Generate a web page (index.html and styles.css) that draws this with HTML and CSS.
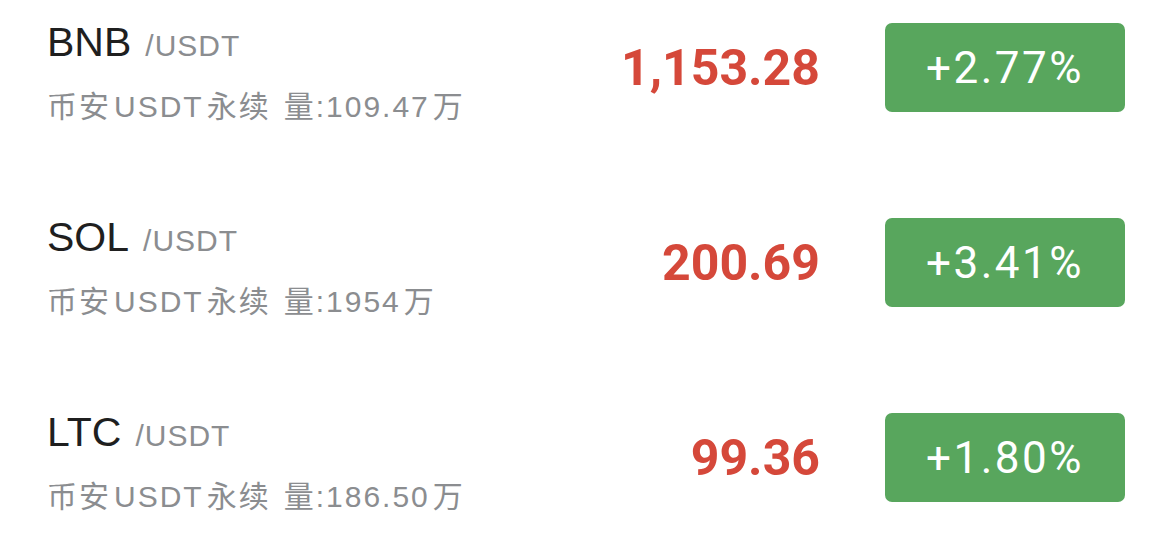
FILE: index.html
```html
<!DOCTYPE html>
<html>
  <head>
    <meta charset="utf-8">
    <title>USDT 永续</title>
    <link rel="stylesheet" href="styles.css">
  </head>
  <body>
    <div class="list">
      <div class="row">
        <div class="pair">
          <div class="symbol">BNB<span class="quote">/USDT</span></div>
          <div class="sub">币安<span class="latin">USDT</span>永续<span class="vol">量:109.47<span class="unit">万</span></span></div>
        </div>
        <div class="price">1,153.28</div>
        <div class="change">+2.77%</div>
      </div>
      <div class="row">
        <div class="pair">
          <div class="symbol">SOL<span class="quote">/USDT</span></div>
          <div class="sub">币安<span class="latin">USDT</span>永续<span class="vol">量:1954<span class="unit">万</span></span></div>
        </div>
        <div class="price">200.69</div>
        <div class="change">+3.41%</div>
      </div>
      <div class="row">
        <div class="pair">
          <div class="symbol">LTC<span class="quote">/USDT</span></div>
          <div class="sub">币安<span class="latin">USDT</span>永续<span class="vol">量:186.50<span class="unit">万</span></span></div>
        </div>
        <div class="price">99.36</div>
        <div class="change">+1.80%</div>
      </div>
    </div>
  </body>
</html>
```

FILE: styles.css
```css
body {
  margin: 0;
  background: #fff;
  font-family: "Liberation Sans", "Noto Sans CJK SC", sans-serif;
}
.list {
  display: flex;
  flex-direction: column;
  gap: 60px;
}
.row {
  display: flex;
  align-items: center;
  height: 135px;
  padding: 0 45px 0 47px;
}
.pair {
  flex: 1;
  align-self: flex-start;
  padding-top: 18px;
}
.symbol {
  font-size: 41px;
  line-height: 48px;
  color: #1f1f1f;
}
.quote {
  margin-left: 14px;
  font-size: 30px;
  letter-spacing: 1px;
  color: #8b8d90;
}
.sub {
  margin-top: 17px;
  font-size: 30px;
  line-height: 40px;
  letter-spacing: 2px;
  color: #8b8d90;
}
.latin {
  margin: 0 3px;
}
.vol {
  margin-left: 13px;
}
.unit {
  margin-left: 3px;
}
.price {
  font-family: Roboto, sans-serif;
  font-weight: 700;
  font-size: 50px;
  color: #d5483a;
}
.change {
  width: 240px;
  height: 89px;
  margin-left: 65px;
  border-radius: 7px;
  background: #58a65d;
  color: #fff;
  font-family: Roboto, sans-serif;
  font-size: 44px;
  letter-spacing: 2.5px;
  display: flex;
  align-items: center;
  justify-content: center;
}
```
